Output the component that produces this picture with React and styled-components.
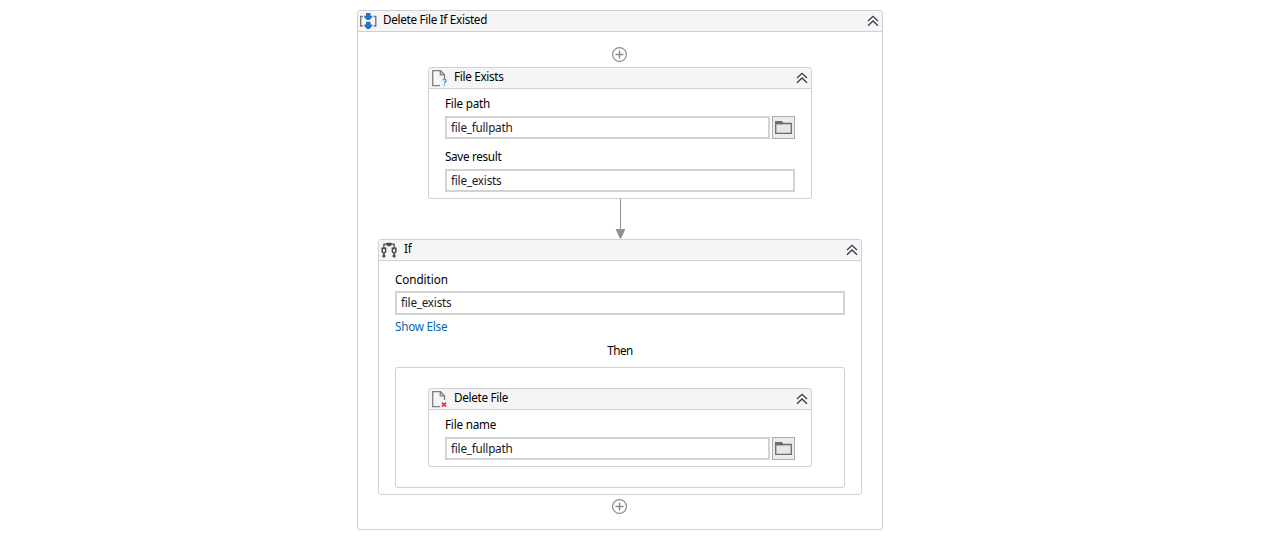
import React from "react";
import styled, { createGlobalStyle } from "styled-components";

const Global = createGlobalStyle`
  * { box-sizing: border-box; }
  body {
    margin: 0;
    background: #fff;
    color: #000;
    font: 11.7px/14px "Noto Sans", "Open Sans", sans-serif;
  }
  svg { display: block; flex: none; }
`;

const Page = styled.main`
  height: 555px;
  padding: 10px 0 0 357px;
`;

const Card = styled.section`
  display: flex;
  flex-direction: column;
  width: ${(p) => p.$w}px;
  height: ${(p) => p.$h}px;
  border: 1px solid #d0d0d0;
  border-radius: 3px;
  background: #fff;
`;

const Header = styled.header`
  display: flex;
  align-items: center;
  flex: none;
  height: 21px;
  padding: 0 3px 0 2px;
  border-bottom: 1px solid #d0d0d0;
  border-radius: 2px 2px 0 0;
  background: #f5f5f5;
`;

const Title = styled.h2`
  flex: 1;
  margin: 0 0 4px ${(p) => p.$gap || 8}px;
  font-size: 11.7px;
  font-weight: 400;
  line-height: 14px;
  letter-spacing: -0.3px;
`;

const Canvas = styled.div`
  display: flex;
  flex-direction: column;
  align-items: center;
  padding-top: 15px;
`;

const Body = styled.div`
  padding: ${(p) => p.$top || 7}px 16px 0;
`;

const Label = styled.label`
  display: block;
  height: 16px;
  margin: ${(p) => p.$top || 0}px 0 ${(p) => p.$bottom || 4}px;
  letter-spacing: ${(p) => p.$ls || -0.2}px;
`;

const FieldRow = styled.div`
  display: flex;
  gap: 2px;
`;

const Field = styled.div`
  flex: 1;
  height: ${(p) => p.$h || 23}px;
  padding-left: 4px;
  border: 2px solid #d2d2d3;
  color: #141c2c;
  line-height: 18px;
  letter-spacing: -0.22px;
`;

const Browse = styled.button`
  display: flex;
  align-items: center;
  justify-content: center;
  width: 23px;
  height: 23px;
  padding: 0;
  border: 1px solid #acacac;
  background: #ececec;
`;

const ShowElse = styled.a`
  display: block;
  height: 16px;
  margin-top: 4px;
  color: #0067b0;
  letter-spacing: -0.24px;
`;

const Then = styled.div`
  height: 16px;
  margin-top: 8px;
  text-align: center;
  letter-spacing: -0.45px;
`;

const Branch = styled.div`
  display: flex;
  justify-content: center;
  height: 121px;
  margin-top: 8px;
  padding-top: 20px;
  border: 1px solid #d0d0d0;
  border-radius: 3px;
`;

const AddSlot = styled.div`
  padding: ${(p) => p.$top || 0}px 1px 5px 0;
`;

const Collapse = () => (
  <svg width="12" height="12" viewBox="0 0 12 12" fill="none" stroke="#353b50" strokeWidth="1.3">
    <path d="M1 6 6 1.300l5 4.700M1 10.700 6 6l5 4.700" />
  </svg>
);

const Add = () => (
  <svg width="15" height="15" viewBox="0 0 15 15" fill="none" stroke="#8b8b8b">
    <circle cx="7.5" cy="7.5" r="6.9" strokeWidth="1.2" />
    <path d="M3.5 7.5h8M7.5 3.5v8" strokeWidth="1.4" />
  </svg>
);

const Arrow = () => (
  <svg width="10" height="40" viewBox="0 0 10 40">
    <path d="M5.5 0v32" stroke="#929292" />
    <path d="M.5 30h10l-4.300 9.500h-1.400z" fill="#929292" />
  </svg>
);

const SequenceIcon = () => (
  <svg width="17" height="16" viewBox="0 0 17 16">
    <path d="M2.800 3.500H.7v9.500h2.100M13.700 3.500h2.100v9.500h-2.100" fill="none" stroke="#707070" strokeWidth="1.300" />
    <path d="M6 0h4.500v2.700H12.300v1.500L9.500 7H7L4.200 4.200V2.700H6zM6 8.700h4.500v2.700H12.300v1.500L9.500 16H7L4.200 12.900V11.400H6z" fill="#2373c4" />
  </svg>
);

const FileIcon = ({ mark }) => (
  <svg width="17" height="17" viewBox="0 0 17 17" fill="none">
    <path d="M9 15.700H1.700V.7H9.500L13.500 4.700V9M9.300.7v4.200h4.200" stroke="#7b8086" strokeWidth="1.300" />
    {mark === "question" ? (
      <g>
        <path d="M11.900 10.500c.2-1.600 3.300-1.500 3.100.4-.1 1-1.500 1-1.500 2.300" stroke="#4a8edc" strokeWidth="1.300" />
        <path d="M12.800 14.200h1.300v1.400h-1.300z" fill="#4a8edc" />
      </g>
    ) : (
      <path d="m11 11.700 4 4m0-4-4 4" stroke="#e8303c" strokeWidth="1.700" />
    )}
  </svg>
);

const IfIcon = () => (
  <svg width="16" height="16" viewBox="0 0 16 16" fill="none" stroke="#484848" strokeWidth="1.500">
    <path d="M2.900 6V2.200h10.200V6M2.900 11v3M13.100 11v3" strokeWidth="1.300" />
    <path d="M1.200 6.300h3.400v3.700L2.900 11.300 1.200 10zM11.400 6.300h3.400v3.700l-1.700 1.300-1.700-1.300z" />
    <path d="M5.900.7h4.200l1 1.500-2 2H6.900l-2-2z" fill="#484848" stroke="none" />
    <circle cx="2.900" cy="14" r="1.600" fill="#484848" stroke="none" />
    <circle cx="13.100" cy="14" r="1.600" fill="#484848" stroke="none" />
  </svg>
);

const FolderIcon = () => (
  <svg width="17" height="13" viewBox="0 0 17 13">
    <path d="M.7 2.500h15.600v9.800H.7z" fill="#e6e6e6" stroke="#6c6c6c" strokeWidth="1.300" />
    <path d="M0 0h7l1.200 2v1.200H0z" fill="#6c6c6c" />
  </svg>
);

const BrowseField = ({ value }) => (
  <FieldRow>
    <Field>{value}</Field>
    <Browse aria-label="Browse"><FolderIcon /></Browse>
  </FieldRow>
);

export default function App() {
  return (
    <>
      <Global />
      <Page>
        <Card $w={526} $h={520}>
          <Header>
            <SequenceIcon />
            <Title $gap={6}>Delete File If Existed</Title>
            <Collapse />
          </Header>
          <Canvas>
            <AddSlot><Add /></AddSlot>
            <Card $w={384} $h={132}>
              <Header>
                <FileIcon mark="question" />
                <Title $gap={6}>File Exists</Title>
                <Collapse />
              </Header>
              <Body>
                <Label>File path</Label>
                <BrowseField value="file_fullpath" />
                <Label $top={10} $bottom={4} $ls={-0.31}>Save result</Label>
                <Field>file_exists</Field>
              </Body>
            </Card>
            <Arrow />
            <Card $w={484} $h={256}>
              <Header>
                <IfIcon />
                <Title $gap={7}>If</Title>
                <Collapse />
              </Header>
              <Body $top={11}>
                <Label $bottom={3} $ls={-0.07}>Condition</Label>
                <Field $h={24}>file_exists</Field>
                <ShowElse>Show Else</ShowElse>
                <Then>Then</Then>
                <Branch>
                  <Card $w={384} $h={79}>
                    <Header>
                      <FileIcon mark="delete" />
                      <Title $gap={6}>Delete File</Title>
                      <Collapse />
                    </Header>
                    <Body>
                      <Label>File name</Label>
                      <BrowseField value="file_fullpath" />
                    </Body>
                  </Card>
                </Branch>
              </Body>
            </Card>
            <AddSlot $top={4}><Add /></AddSlot>
          </Canvas>
        </Card>
      </Page>
    </>
  );
}
